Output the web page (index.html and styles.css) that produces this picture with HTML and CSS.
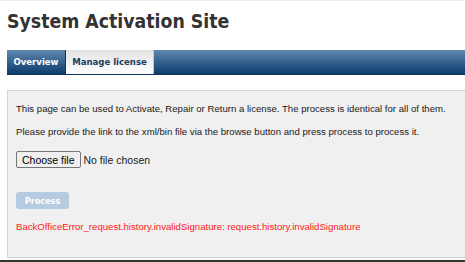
FILE: index.html
```html
<!DOCTYPE html>
<html lang="en">
<head>
  <meta charset="UTF-8">
  <title>System Activation Site</title>
  <link rel="stylesheet" href="styles.css">
</head>
<body>

<div class="page">
  <h1>System Activation Site</h1>

  <div class="tab-bar">
    <a href="#" class="tab">Overview</a>
    <a href="#" class="tab active">Manage license</a>
  </div>

  <div class="panel">
    <p>This page can be used to Activate, Repair or Return a license. The process is identical for all of them.</p>
    <p>Please provide the link to the xml/bin file via the browse button and press process to process it.</p>
    <div class="file-row">
      <button class="choose">Choose file</button>
      <span>No file chosen</span>
    </div>
    <button class="process" disabled>Process</button>
    <p class="error">BackOfficeError_request.history.invalidSignature: request.history.invalidSignature</p>
  </div>
</div>

<div class="bottom-line"></div>

</body>
</html>
```

FILE: styles.css
```css
html, body {
  margin: 0;
  padding: 0;
  overflow: hidden;
  background: #fff;
}
body {
  border-top: 1px solid #ececec;
  width: 465px;
  height: 261px;
  position: relative;
}
.page {
  margin-left: 7px;
  width: 520px;
}
h1 {
  font-family: "DejaVu Sans", Verdana, sans-serif;
  font-stretch: condensed;
  font-size: 19.3px;
  font-weight: bold;
  color: #333;
  margin: 0;
  height: 49px;
  line-height: 42px;
}
.tab-bar {
  display: flex;
  height: 24px;
  background: linear-gradient(#6089b0, #2c5a88 60%, #0f3d6a);
  border-bottom: 1px solid #0b335a;
}
.tab {
  font-family: "DejaVu Sans", Verdana, sans-serif;
  font-stretch: condensed;
  font-size: 9.5px;
  font-weight: bold;
  color: #fff;
  text-decoration: none;
  white-space: nowrap;
  line-height: 24px;
  width: 58px;
  text-align: center;
  border-right: 1px solid #0c355c;
}
.tab.active {
  color: #1d3e62;
  width: 87px;
  background: linear-gradient(#e4e4e4, #fdfdfd);
  border-right: 1px solid #c8c8c8;
}
.panel {
  margin-top: 15px;
  height: 166px;
  background: #f0f0f0;
  border: 1px solid #d4d4d4;
  padding: 0 8px;
  font-family: "Liberation Sans", Arial, sans-serif;
  font-size: 9.6px;
  color: #1a1a1a;
}
.panel p {
  margin: 0;
}
.panel p:first-child {
  padding-top: 12px;
}
.panel p + p {
  margin-top: 12px;
}
.file-row {
  margin-top: 14px;
  display: flex;
  align-items: center;
  gap: 3px;
  font-size: 10.5px;
}
.choose {
  font-family: "Liberation Sans", Arial, sans-serif;
  font-size: 10.5px;
  height: 17px;
  padding: 0 5px;
  background: #efefef;
  border: 1px solid #767676;
  border-radius: 2px;
  color: #000;
}
.process {
  display: block;
  margin-top: 24px;
  height: 17px;
  width: 53px;
  padding: 0;
  font-family: "DejaVu Sans", Verdana, sans-serif;
  font-stretch: condensed;
  font-size: 9px;
  font-weight: bold;
  color: #fff;
  background: #b4cbe0;
  border: none;
  border-radius: 3px;
}
.panel p.error {
  margin-top: 12px;
  font-size: 9.6px;
  color: #ff2020;
}
.bottom-line {
  position: absolute;
  left: 0;
  right: 0;
  bottom: 0;
  height: 2px;
  background: #333;
}
```
